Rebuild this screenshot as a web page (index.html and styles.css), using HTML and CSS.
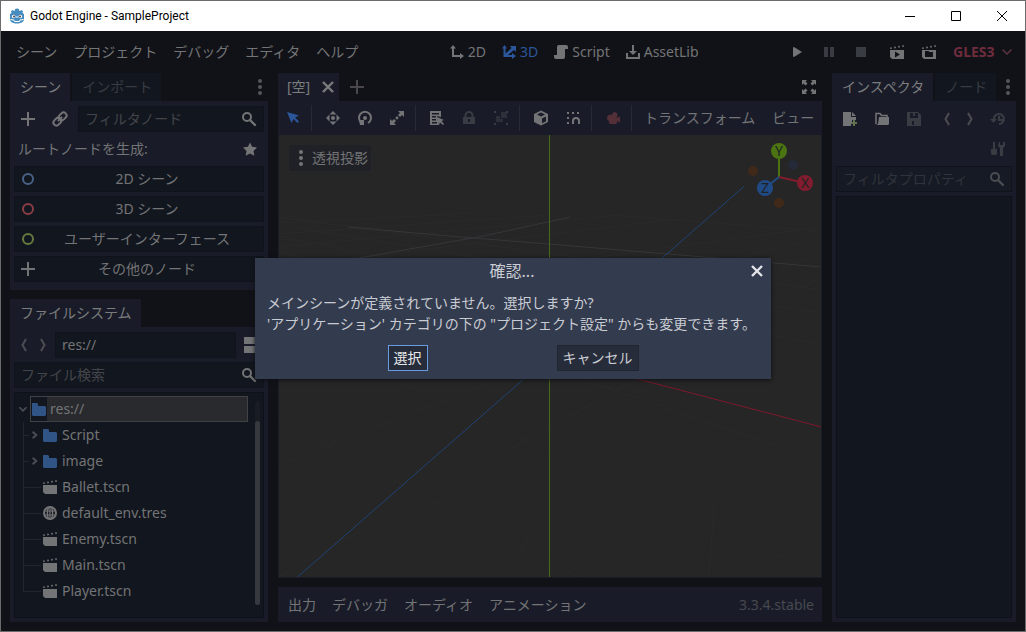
FILE: index.html
```html
<!DOCTYPE html>
<html lang="ja">
<head>
<meta charset="utf-8">
<meta name="viewport" content="width=device-width, initial-scale=1">
<title>Godot Engine - SampleProject</title>
<link rel="stylesheet" href="styles.css">
</head>
<body>
<svg class="sprite" aria-hidden="true">
  <symbol id="add" viewBox="0 0 16 16"><path fill="currentColor" d="M7 1v6H1v2h6v6h2V9h6V7H9V1z"/></symbol>
  <symbol id="search" viewBox="0 0 16 16"><circle cx="6" cy="6" r="4" fill="none" stroke="currentColor" stroke-width="2"/><path d="M9 9l5 5" stroke="currentColor" stroke-width="2.4" stroke-linecap="round"/></symbol>
  <symbol id="link" viewBox="0 0 16 16"><g fill="none" stroke="currentColor" stroke-width="2" transform="rotate(-45 8 8)"><rect x="0" y="5" width="8.500" height="6" rx="3"/><rect x="7.500" y="5" width="8.500" height="6" rx="3"/><path d="M5 8h6"/></g></symbol>
  <symbol id="dots" viewBox="0 0 16 16"><g fill="currentColor"><circle cx="8" cy="2" r="2"/><circle cx="8" cy="8" r="2"/><circle cx="8" cy="14" r="2"/></g></symbol>
  <symbol id="star" viewBox="0 0 16 16"><path fill="currentColor" d="M8 1.500l2.100 4.300 4.900.7-3.500 3.400.9 4.900L8 12.500l-4.400 2.300.9-4.900L1 6.500l4.900-.7z"/></symbol>
  <symbol id="ring" viewBox="0 0 16 16"><circle cx="8" cy="8" r="5" fill="none" stroke="currentColor" stroke-width="2"/></symbol>
  <symbol id="left" viewBox="0 0 16 16"><path d="M10 2L6.500 8l3.500 6" fill="none" stroke="currentColor" stroke-width="2"/></symbol>
  <symbol id="right" viewBox="0 0 16 16"><path d="M6 2l3.500 6L6 14" fill="none" stroke="currentColor" stroke-width="2"/></symbol>
  <symbol id="chev-down" viewBox="0 0 16 16"><path d="M4 6l4 4 4-4" fill="none" stroke="currentColor" stroke-width="2"/></symbol>
  <symbol id="chev-wide" viewBox="0 0 16 16"><path d="M3.500 5.500l4.500 4.500 4.500-4.500" fill="none" stroke="currentColor" stroke-width="1.500"/></symbol>
  <symbol id="chev-right" viewBox="0 0 16 16"><path d="M6 4.500L10 8l-4 3.500" fill="none" stroke="currentColor" stroke-width="2"/></symbol>
  <symbol id="close" viewBox="0 0 16 16"><path d="M3 3l10 10M13 3L3 13" stroke="currentColor" stroke-width="2.400"/></symbol>
  <symbol id="split" viewBox="0 0 16 16"><path fill="currentColor" d="M0 0h16v7H0zM0 9h16v7H0z"/></symbol>
  <symbol id="folder" viewBox="0 0 16 16"><path fill="currentColor" d="M1 2h5l1 1v2h7l1 1v8l-1 1H2l-1-1z"/></symbol>
  <symbol id="clap" viewBox="0 0 16 16"><path fill="currentColor" d="M1 3.500l1.500-.3.600 1.500-1.700.4zM5 2.800l1.500-.3.600 1.500-1.700.4zM9 2.100l1.500-.3.600 1.500-1.700.4zM13 1.400l1.500-.3.500 1.700-1.500.3zM1 6h14v9H3l-2-2z"/></symbol>
  <symbol id="clap-play" viewBox="0 0 16 16"><path fill="currentColor" fill-rule="evenodd" d="M1 3.500l1.500-.3.600 1.500-1.700.4zM5 2.800l1.500-.3.600 1.500-1.700.4zM9 2.100l1.500-.3.600 1.500-1.700.4zM13 1.400l1.500-.3.500 1.700-1.500.3zM1 6h14v9H3l-2-2zM6 7.500v6l5-3z"/></symbol>
  <symbol id="clap-open" viewBox="0 0 16 16"><path fill="currentColor" fill-rule="evenodd" d="M1 3.500l1.500-.3.600 1.500-1.700.4zM5 2.800l1.500-.3.600 1.500-1.700.4zM9 2.100l1.500-.3.600 1.500-1.700.4zM13 1.400l1.500-.3.500 1.700-1.500.3zM1 6h14v9H3l-2-2zM4 7v6h8V8H8.500l-1-1z"/></symbol>
  <symbol id="globe" viewBox="0 0 16 16"><g fill="none" stroke="currentColor"><circle cx="8" cy="8" r="6" stroke-width="2"/><ellipse cx="8" cy="8" rx="2.600" ry="6" stroke-width="1.400"/><path d="M2 6h12M2 10h12M8 2v12" stroke-width="1.200"/></g></symbol>
  <symbol id="axes2" viewBox="0 0 16 16"><path fill="currentColor" d="M4 1l3 3.500H5V11h6V9l4 3-4 3v-2H3V4.500H1z"/></symbol>
  <symbol id="axes3" viewBox="0 0 16 16"><path fill="currentColor" d="M3.500 1L6 4.500H4.500v5L10.500 4 9 2h6v6l-2-2-6 5h4V9l4 3-4 3v-2H2.500V4.500H1z"/></symbol>
  <symbol id="script" viewBox="0 0 16 16"><path fill="currentColor" d="M6 1h7a2 2 0 0 1 2 2v2h-3v8a2 2 0 0 1-2 2H3a2 2 0 0 1-2-2v-2h3V3a2 2 0 0 1 2-2z"/></symbol>
  <symbol id="download" viewBox="0 0 16 16"><path fill="currentColor" d="M7 1h2v6h3l-4 4-4-4h3zM1 9h2v4h10V9h2v6H1z"/></symbol>
  <symbol id="play" viewBox="0 0 16 16"><path fill="currentColor" d="M4 3.500v9l1 .5 8-5-8-5z"/></symbol>
  <symbol id="pause" viewBox="0 0 16 16"><path fill="currentColor" d="M3 3h4v10H3zM9 3h4v10H9z"/></symbol>
  <symbol id="stop" viewBox="0 0 16 16"><path fill="currentColor" d="M3 3h10v10H3z"/></symbol>
  <symbol id="expand" viewBox="0 0 16 16"><path fill="currentColor" d="M1 1h5L4.500 2.500l2 2-2 2-2-2L1 6zM15 1v5l-1.500-1.500-2 2-2-2 2-2L10 1zM1 15v-5l1.500 1.500 2-2 2 2-2 2L6 15zM15 15h-5l1.500-1.500-2-2 2-2 2 2L15 10z"/></symbol>
  <symbol id="select" viewBox="0 0 16 16"><path fill="currentColor" d="M2 2l4.500 11 2-4 4 4 1.500-1.500-4-4 4-2z"/></symbol>
  <symbol id="move" viewBox="0 0 16 16"><path fill="currentColor" d="M8 1l3.500 3.500h-7zM8 15l3.500-3.500h-7zM1 8l3.500-3.500v7zM15 8l-3.500-3.500v7z"/><circle cx="8" cy="8" r="2" fill="currentColor"/></symbol>
  <symbol id="rotate" viewBox="0 0 16 16"><path d="M5 13A6 6 0 1 1 11 13" fill="none" stroke="currentColor" stroke-width="2"/><path d="M2 10h5v5H3z" fill="currentColor"/><circle cx="8" cy="8" r="2" fill="currentColor"/></symbol>
  <symbol id="scale" viewBox="0 0 16 16"><path fill="currentColor" d="M9 1h6v6l-2-2-2 2-2-2 2-2zM7 15H1V9l2 2 2-2 2 2-2 2z"/><circle cx="8" cy="8" r="1.400" fill="currentColor"/></symbol>
  <symbol id="list" viewBox="0 0 16 16"><path fill="currentColor" fill-rule="evenodd" d="M1 1h11v6L8 6l2 9H1zM3 3v1.500h7V3zM3 6v1.500h4V6zM3 9v1.500h4V9zM3 12v1.500h5V12z"/><path fill="currentColor" d="M8 7l7 3-2.500 1 2.500 3-1 1-3-2.500-1 2.500z"/></symbol>
  <symbol id="lock" viewBox="0 0 16 16"><path d="M4.500 8V5.500a3.500 3.500 0 0 1 7 0V8" fill="none" stroke="currentColor" stroke-width="2"/><path fill="currentColor" fill-rule="evenodd" d="M2 7h12v7H2zM7 9v3h2V9z"/></symbol>
  <symbol id="group" viewBox="0 0 16 16"><path fill="currentColor" d="M1 1h2v2H1zM13 1h2v2h-2zM1 13h2v2H1zM13 13h2v2h-2z"/><path fill="currentColor" opacity=".6" d="M8 2h6v6H8zM3 6h4v3h3v3H3z"/></symbol>
  <symbol id="cube" viewBox="0 0 16 16"><path fill="currentColor" fill-rule="evenodd" d="M8 .5l7 3.500v8l-7 3.500L1 12V4zM8 2.500L4 4.500l4 2 4-2zM9 8.500v4.700l4-2V6.500z"/></symbol>
  <symbol id="snap" viewBox="0 0 16 16"><path fill="currentColor" d="M2 2h2v2H2zM7 2h2v2H7zM2 7h2v2H2zM2 12h2v2H2zM12 2h2v2h-2z"/><path d="M8 14v-3a3 3 0 0 1 6 0v3" fill="none" stroke="currentColor" stroke-width="2"/></symbol>
  <symbol id="camera" viewBox="0 0 16 16"><path fill="currentColor" d="M9.500 2a3 3 0 0 1 2.300 5v1L15 6.500v6L12 11v2l-1 1H5l-1-1v-2a3 3 0 1 1 3-6 3 3 0 0 1 2.500-3z"/></symbol>
  <symbol id="new" viewBox="0 0 16 16"><path fill="currentColor" d="M1 1h8v5h5v3h-4v3H9v3H1zM10 1l4 4h-4z"/><path fill="#60734e" d="M11 9h2v2h2v2h-2v2h-2v-2H9v-2h2z"/></symbol>
  <symbol id="open" viewBox="0 0 16 16"><path fill="none" stroke="currentColor" stroke-width="1.500" d="M2 13V2.500h4l1.500 2H13V7"/><path fill="currentColor" d="M5 6h10v7l-1 1H2l2-1z"/></symbol>
  <symbol id="save" viewBox="0 0 16 16"><path fill="currentColor" fill-rule="evenodd" d="M1 1h11l3 3v11H1zM4 2v5h8V2H9v3H7V2zM6 10v4h2v-4z"/></symbol>
  <symbol id="history" viewBox="0 0 16 16"><path d="M4 9a5 5 0 1 1 5 4M9 5v4h4" fill="none" stroke="currentColor" stroke-width="2"/><path fill="currentColor" d="M0 8h7l-3.500 4z"/></symbol>
  <symbol id="tools" viewBox="0 0 16 16"><path fill="currentColor" d="M3 1h2v7h2v4a2 2 0 0 1-2 2H3a2 2 0 0 1-2-2V8h2zM9 1h1v3h3V1h2v4l-2 2v8h-3V7L8 5z"/></symbol>
</svg>

<div class="window">
  <header class="titlebar">
    <svg class="logo" viewBox="0 0 16 16"><path fill="#478cbf" d="M2 3l2-1 1 1 1-.5V1l2-.5 2 .5v1.500l1 .5 1-1 2 1-.5 2L15 6v5c0 3-3 4.500-7 4.500S1 14 1 11V6l1.500-1z"/><circle cx="4.700" cy="8.500" r="1.800" fill="#fff"/><circle cx="11.300" cy="8.500" r="1.800" fill="#fff"/><circle cx="5" cy="8.500" r="1" fill="#414042"/><circle cx="11" cy="8.500" r="1" fill="#414042"/><path d="M1.500 11.500L5 12l.5 1.500h5L11 12l3.500-.5M8 8v2" fill="none" stroke="#fff"/></svg>
    <h1 class="title">Godot Engine - SampleProject</h1>
    <div class="winbtns">
      <button aria-label="最小化"><svg viewBox="0 0 12 12"><path d="M1 6.500h10"/></svg></button>
      <button aria-label="最大化"><svg viewBox="0 0 12 12"><path d="M1.500 1.500h9v9h-9z"/></svg></button>
      <button aria-label="閉じる"><svg viewBox="0 0 12 12"><path d="M1 1l10 10M11 1L1 11"/></svg></button>
    </div>
  </header>

  <div class="menubar">
    <nav class="menus"><button>シーン</button><button>プロジェクト</button><button>デバッグ</button><button>エディタ</button><button>ヘルプ</button></nav>
    <nav class="menus modes">
      <button><svg class="i"><use href="#axes2"/></svg>2D</button>
      <button class="active"><svg class="i"><use href="#axes3"/></svg>3D</button>
      <button><svg class="i"><use href="#script"/></svg>Script</button>
      <button><svg class="i"><use href="#download"/></svg>AssetLib</button>
    </nav>
    <div class="menus runbar">
      <button aria-label="実行"><svg class="i"><use href="#play"/></svg></button>
      <button class="off" aria-label="一時停止"><svg class="i"><use href="#pause"/></svg></button>
      <button class="off" aria-label="停止"><svg class="i"><use href="#stop"/></svg></button>
      <button class="playscene" aria-label="シーンを実行"><svg class="i"><use href="#clap-play"/></svg></button>
      <button aria-label="カスタムシーンを実行"><svg class="i"><use href="#clap-open"/></svg></button>
      <label class="driver"><select aria-label="レンダラー"><option>GLES3</option></select><svg class="i"><use href="#chev-wide"/></svg></label>
    </div>
  </div>

  <main class="workspace">
    <div class="column">
      <section class="dock">
        <div class="tabs"><button class="tab on">シーン</button><button class="tab">インポート</button><button class="tabmenu" aria-label="ドックメニュー"><svg class="i"><use href="#dots"/></svg></button></div>
        <div class="panel scene">
          <div class="row">
            <button class="tool" aria-label="追加"><svg class="i"><use href="#add"/></svg></button>
            <button class="tool" aria-label="インスタンス"><svg class="i"><use href="#link"/></svg></button>
            <label class="field"><input type="text" aria-label="フィルタノード" placeholder="フィルタノード"><svg class="i"><use href="#search"/></svg></label>
          </div>
          <div class="caption"><span>ルートノードを生成:</span><button aria-label="お気に入り"><svg class="i"><use href="#star"/></svg></button></div>
          <div class="roots">
            <button class="root"><svg class="i blue"><use href="#ring"/></svg><span>2D シーン</span></button>
            <button class="root"><svg class="i red"><use href="#ring"/></svg><span>3D シーン</span></button>
            <button class="root"><svg class="i green"><use href="#ring"/></svg><span>ユーザーインターフェース</span></button>
            <button class="root"><svg class="i"><use href="#add"/></svg><span>その他のノード</span></button>
          </div>
        </div>
      </section>
      <section class="dock grow">
        <div class="tabs"><button class="tab on">ファイルシステム</button></div>
        <div class="panel files">
          <div class="row">
            <div class="nav"><button aria-label="戻る"><svg class="i"><use href="#left"/></svg></button><button aria-label="進む"><svg class="i"><use href="#right"/></svg></button></div>
            <label class="field path"><input type="text" aria-label="パス" value="res://"></label>
            <button class="splitbtn" aria-label="分割モード"><svg class="i"><use href="#split"/></svg></button>
          </div>
          <label class="field"><input type="text" aria-label="ファイル検索" placeholder="ファイル検索"><svg class="i"><use href="#search"/></svg></label>
          <div class="box tree">
            <div class="rootitem"><svg class="i arrow"><use href="#chev-down"/></svg><div class="selected"><span class="foldercell"><svg class="i"><use href="#folder"/></svg></span>res://</div></div>
            <ul class="items">
              <li class="dir"><svg class="i arrow"><use href="#chev-right"/></svg><svg class="i dircolor"><use href="#folder"/></svg>Script</li>
              <li class="dir"><svg class="i arrow"><use href="#chev-right"/></svg><svg class="i dircolor"><use href="#folder"/></svg>image</li>
              <li><svg class="i"><use href="#clap"/></svg>Ballet.tscn</li>
              <li><svg class="i"><use href="#globe"/></svg>default_env.tres</li>
              <li><svg class="i"><use href="#clap"/></svg>Enemy.tscn</li>
              <li><svg class="i"><use href="#clap"/></svg>Main.tscn</li>
              <li><svg class="i"><use href="#clap"/></svg>Player.tscn</li>
            </ul>
            <div class="scroll"><div class="thumb"></div></div>
          </div>
        </div>
      </section>
    </div>

    <div class="column">
      <section class="dock grow">
        <div class="tabs"><button class="tab on scenetab">[空]<svg class="i"><use href="#close"/></svg></button><button class="addtab" aria-label="新しいタブ"><svg class="i"><use href="#add"/></svg></button><button class="fullscreen" aria-label="集中モード"><svg class="i"><use href="#expand"/></svg></button></div>
        <div class="editor">
          <div class="toolbar">
            <button class="tool active" aria-label="選択モード"><svg class="i"><use href="#select"/></svg></button><i class="sep"></i>
            <button class="tool" aria-label="移動"><svg class="i"><use href="#move"/></svg></button>
            <button class="tool" aria-label="回転"><svg class="i"><use href="#rotate"/></svg></button>
            <button class="tool" aria-label="拡縮"><svg class="i"><use href="#scale"/></svg></button><i class="sep"></i>
            <button class="tool" aria-label="リスト選択"><svg class="i"><use href="#list"/></svg></button>
            <button class="tool off" aria-label="ロック"><svg class="i"><use href="#lock"/></svg></button>
            <button class="tool off" aria-label="グループ"><svg class="i"><use href="#group"/></svg></button><i class="sep"></i>
            <button class="tool" aria-label="ローカル空間"><svg class="i"><use href="#cube"/></svg></button>
            <button class="tool" aria-label="スナップ"><svg class="i"><use href="#snap"/></svg></button><i class="sep"></i>
            <button class="tool cam" aria-label="カメラ"><svg class="i"><use href="#camera"/></svg></button><i class="sep"></i>
            <button class="textbtn">トランスフォーム</button><button class="textbtn">ビュー</button>
          </div>
          <div class="viewport">
            <svg class="space" viewBox="0 0 543 442" preserveAspectRatio="xMidYMid slice">
              <g stroke="#2a2a2a" fill="none">
                <path d="M0 82L543 155M0 90L543 178M0 101L543 210M0 117L430 222M0 142L543 325M0 192L543 440M0 285L300 442"/>
                <path d="M543 96L330 80M0 88L200 78M0 99L270 80M0 112L340 80M0 132L400 84M0 165L543 92M0 235L543 103M0 330L543 118M0 442L543 142M225 442L265 378M430 442L436 370"/>
              </g>
              <path d="M75 124L205 101 292 82M70 92L170 101 270 109 485 127 543 132" fill="none" stroke="#36363b"/>
              <path d="M271 0V442" stroke="#4a6a1b"/>
              <path d="M19 442L466 51" stroke="#1f4375"/>
              <path d="M271 221L543 292" stroke="#7d192b"/>
            </svg>
            <button class="chip"><svg class="i"><use href="#dots"/></svg>透視投影</button>
            <svg class="gizmo" viewBox="0 0 72 72">
              <circle cx="10" cy="31" r="5" fill="#41291a"/><circle cx="36" cy="63" r="5" fill="#41291a"/><circle cx="50" cy="25" r="5" fill="#252a38"/>
              <g stroke-width="2"><path d="M36 37V11" stroke="#4c7413"/><path d="M36 37L62 43" stroke="#821c2f"/><path d="M36 37L22 48" stroke="#204a86"/></g>
              <circle cx="36" cy="11" r="8" fill="#4c7413"/><circle cx="62" cy="43" r="8" fill="#821c2f"/><circle cx="22" cy="48" r="8" fill="#204a86"/>
              <g class="axis"><text x="36" y="16">Y</text><text x="62" y="48">X</text><text x="22" y="53">Z</text></g>
            </svg>
          </div>
        </div>
      </section>
      <footer class="bottombar"><button>出力</button><button>デバッガ</button><button>オーディオ</button><button>アニメーション</button><span class="version">3.3.4.stable</span></footer>
    </div>

    <div class="column">
      <section class="dock grow">
        <div class="tabs"><button class="tab on">インスペクタ</button><button class="tab">ノード</button><button class="tabmenu" aria-label="ドックメニュー"><svg class="i"><use href="#dots"/></svg></button></div>
        <div class="panel inspector">
          <div class="row">
            <button class="tool" aria-label="新規"><svg class="i"><use href="#new"/></svg></button>
            <button class="tool" aria-label="開く"><svg class="i"><use href="#open"/></svg></button>
            <button class="tool off" aria-label="保存"><svg class="i"><use href="#save"/></svg></button>
            <div class="nav end"><button aria-label="前へ"><svg class="i"><use href="#left"/></svg></button><button aria-label="次へ"><svg class="i"><use href="#right"/></svg></button></div>
            <button class="tool off" aria-label="履歴"><svg class="i"><use href="#history"/></svg></button>
          </div>
          <div class="row right"><button class="tool off" aria-label="設定"><svg class="i"><use href="#tools"/></svg></button></div>
          <label class="field muted"><input type="text" aria-label="フィルタプロパティ" placeholder="フィルタプロパティ"><svg class="i"><use href="#search"/></svg></label>
          <div class="box"></div>
        </div>
      </section>
    </div>
  </main>

  <div class="overlay">
    <div class="dialog" role="dialog" aria-labelledby="dlg">
      <div class="dialoghead"><h2 id="dlg">確認...</h2><button class="x" aria-label="閉じる"><svg class="i"><use href="#close"/></svg></button></div>
      <p>メインシーンが定義されていません。選択しますか?<br>'アプリケーション' カテゴリの下の "プロジェクト設定" からも変更できます。</p>
      <div class="actions"><button class="primary">選択</button><button>キャンセル</button></div>
    </div>
  </div>
</div>
</body>
</html>
```
FILE: styles.css
```css
* { box-sizing: border-box; }
body {
  margin: 0;
  background: #111217;
  color: #737476;
  font: 14px/20px "Noto Sans", "Noto Sans CJK JP", sans-serif;
}
button, input, select {
  margin: 0;
  padding: 0;
  border: 0;
  background: none;
  color: inherit;
  font: inherit;
}
button { display: flex; align-items: center; white-space: nowrap; }
.sprite { display: none; }
.i { display: block; flex: none; width: 16px; height: 16px; }

.window {
  position: relative;
  display: flex;
  flex-direction: column;
  min-height: 100vh;
  border: 1px solid #6b6b6b;
}
.titlebar {
  display: flex;
  align-items: center;
  height: 30px;
  padding-left: 8px;
  background: #fff;
  color: #000;
}
.logo { width: 16px; height: 16px; }
.title { flex: 1; margin: 0 0 0 5px; font: 12px/20px Roboto, sans-serif; }
.winbtns { display: flex; }
.winbtns button { justify-content: center; width: 46px; height: 30px; }
.winbtns svg { width: 12px; height: 12px; fill: none; stroke: #000; }

.menubar {
  display: flex;
  align-items: center;
  justify-content: space-between;
  height: 42px;
  padding: 0 10px 0 15px;
}
.menus { display: flex; gap: 16px; }
.modes { gap: 15px; }
.modes button { gap: 3px; }
.active { color: #2c569a; }
.off { color: #3a3c44; }
.playscene { margin-left: 4px; }
.driver { display: flex; align-items: center; gap: 4px; }
.driver select { appearance: none; color: #6f2c3d; font-weight: bold; }
.driver .i { color: #5c3440; }

.workspace {
  flex: 1;
  display: grid;
  grid-template-columns: 258px minmax(0, 1fr) 184px;
  gap: 10px;
  padding: 0 9px 9px;
}
.column { display: flex; flex-direction: column; gap: 9px; min-width: 0; }
.dock { display: flex; flex-direction: column; }
.grow { flex: 1; }
.tabs { display: flex; gap: 2px; height: 28px; }
.tab { padding: 0 9px 0 10px; background: #12161e; color: #393c43; }
.tab.on { background: #191c28; color: #7b7c7e; }
.tabmenu { width: 16px; margin-left: auto; color: #55565a; }
.panel {
  display: flex;
  flex-direction: column;
  flex: 1;
  gap: 4px;
  padding: 5px 4px 4px;
  background: #191c28;
}
.row { display: flex; align-items: center; gap: 4px; height: 26px; }
.right { justify-content: flex-end; }
.tool { justify-content: center; width: 28px; height: 26px; }
.field {
  display: flex;
  align-items: center;
  flex: 1;
  height: 26px;
  padding: 0 6px;
  border: 1px solid #10131a;
  background: #12161e;
}
.panel > .field { flex: none; }
.field input { flex: 1; min-width: 0; width: 0; outline: 0; }
.field input::placeholder { color: #43454b; opacity: 1; }
.muted { background: #161a24; color: #4b4c52; }
.muted input::placeholder { color: #30333b; }
.scene { padding-bottom: 8px; }
.caption {
  display: flex;
  align-items: center;
  justify-content: space-between;
  height: 26px;
  padding: 0 6px 0 4px;
}
.roots { display: grid; gap: 4px; }
.root {
  height: 26px;
  padding: 0 5px;
  border: 1px solid #10131a;
  background: #12161e;
}
.root span { flex: 1; text-align: center; }
.blue { color: #4a6187; }
.red { color: #8a3d45; }
.green { color: #66793f; }

.nav { display: flex; gap: 3px; padding-left: 2px; color: #4c4d53; }
.nav.end { gap: 7px; margin-left: auto; padding-right: 2px; }
.splitbtn { width: 24px; justify-content: center; }
.box { flex: 1; border: 1px solid #0e1118; background: #12161e; }
.tree { position: relative; padding: 3px 15px 12px 0; }
.rootitem { display: flex; align-items: center; padding-left: 1px; }
.rootitem .arrow { width: 14px; }
.arrow { color: #4c4e53; }
.selected {
  display: flex;
  align-items: center;
  gap: 3px;
  flex: 1;
  height: 26px;
  border: 1px solid #414144;
  background: #292a2d;
}
.foldercell { background: #12161e; color: #315486; padding: 4px 0; }
.dircolor { color: #315486; }
.items { margin: 0; padding: 0 0 0 8px; list-style: none; }
.items li {
  position: relative;
  display: flex;
  align-items: center;
  gap: 4px;
  height: 26px;
  padding-left: 19px;
}
.items li::before, .items li::after { content: ""; position: absolute; background: #22262d; }
.items li::before { left: 0; top: 0; width: 1px; height: 100%; }
.items li::after { left: 0; top: 50%; width: 18px; height: 1px; }
.items li.dir { padding-left: 4px; gap: 0; }
.items .dir .arrow { width: 15px; }
.items .dir .dircolor { margin-right: 4px; }
.items .dir::after { width: 6px; }
.items li:last-child::before { height: 50%; }
.scroll { position: absolute; right: 3px; top: 8px; bottom: 12px; width: 5px; border-radius: 3px; background: #191c22; }
.thumb { height: 90%; margin-top: 20px; border-radius: 3px; background: #37393e; }

.scenetab { gap: 10px; padding: 0 3px 0 9px; }
.addtab { padding-left: 8px; color: #4c474c; }
.fullscreen { margin-left: auto; padding-right: 5px; }
.editor { display: flex; flex-direction: column; flex: 1; background: #191c28; }
.toolbar { display: flex; align-items: center; gap: 4px; height: 34px; padding: 0 5px 0 1px; overflow: hidden; }
.sep { flex: none; width: 4px; height: 26px; border-left: 1px solid #272a34; }
.cam { color: #542f38; }
.textbtn { margin: 0 5px; }
.textbtn:last-child { margin-right: 0; margin-left: 8px; }
.viewport { position: relative; flex: 1; margin: 0 1px 1px; background: #262626; overflow: hidden; }
.space { position: absolute; inset: 0; width: 100%; height: 100%; }
.chip {
  position: absolute;
  left: 10px;
  top: 10px;
  gap: 3px;
  height: 26px;
  padding: 0 3px 0 4px;
  background: #202127;
}
.gizmo { position: absolute; top: 5px; right: 6px; width: 72px; height: 72px; }
.axis { fill: #1c2422; font: 14px "Noto Sans", sans-serif; text-anchor: middle; }
.bottombar {
  display: flex;
  align-items: center;
  gap: 16px;
  height: 35px;
  padding: 0 8px 0 10px;
  background: #191c28;
}
.version { margin-left: auto; color: #47494f; }

.overlay {
  position: absolute;
  inset: 0;
  display: flex;
  align-items: center;
  justify-content: center;
  padding-top: 5px;
}
.dialog {
  width: 516px;
  padding: 0 12px 8px;
  background: #333b4f;
  color: #c9ccd2;
  box-shadow: 0 1px 4px #0e0f12;
}
.dialoghead { display: flex; align-items: center; height: 26px; }
.dialoghead h2 { flex: 1; margin: 0; padding-left: 8px; font-size: 16px; font-weight: normal; text-align: center; }
.x { margin-right: -6px; color: #e4e6e9; }
.dialog p { margin: 8px 0 11px; line-height: 21px; white-space: nowrap; }
.actions { display: flex; justify-content: center; gap: 129px; }
.actions button { height: 26px; padding: 0 5px; border: 1px solid #222633; background: #272c3b; }
.actions .primary { border-color: #6a9be0; color: #e6e8ea; }
```
